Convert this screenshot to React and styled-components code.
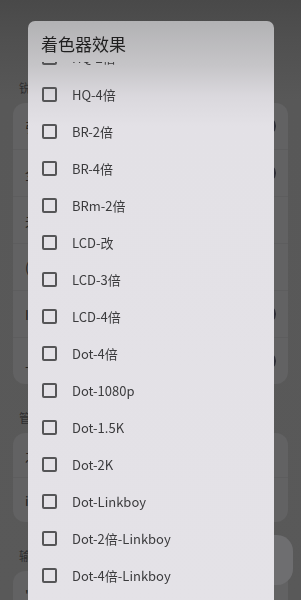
import React from 'react';
import styled, { createGlobalStyle } from 'styled-components';

const GlobalStyle = createGlobalStyle`
  html, body {
    margin: 0;
    padding: 0;
    background: #595959;
    font-family: "Noto Sans CJK SC", "Noto Sans", sans-serif;
    overflow: hidden;
  }
`;

const Page = styled.div`
  width: 301px;
  height: 600px;
  overflow: hidden;
  background: linear-gradient(#494949 0, #505050 40px, #585858 100px, #595959 100%);
  padding: 80px 13px 0;
  box-sizing: border-box;
`;

const SectionLabel = styled.div`
  font-size: 12px;
  line-height: 16px;
  color: #2e2e30;
  padding: 0 0 7px 6px;
`;

const Card = styled.div`
  background: #626263;
  border-radius: 12px;
  margin-bottom: 26px;
  overflow: hidden;
`;

const Row = styled.div`
  height: ${({ compact }) => (compact ? '44px' : '46px')};
  display: flex;
  align-items: center;
  justify-content: space-between;
  padding: 0 12px;
  font-size: 13px;
  color: #222;
  & + & {
    border-top: 1px solid #5d5d5e;
  }
`;

const Toggle = styled.span`
  width: 36px;
  height: 20px;
  border-radius: 10px;
  box-sizing: border-box;
  border: 2px solid #2c2c34;
  background: ${({ on }) => (on ? '#23233c' : 'transparent')};
`;

const Chevron = styled.span`
  font-size: 16px;
  color: #2a2a2a;
  margin-right: 2px;
`;

const Fab = styled.div`
  position: fixed;
  right: 8px;
  top: 535px;
  width: 44px;
  height: 50px;
  border-radius: 16px;
  background: #6e6e70;
`;

const Dialog = styled.div`
  position: fixed;
  left: 28px;
  top: 21px;
  width: 246px;
  bottom: -20px;
  border-radius: 7px 7px 0 0;
  background: linear-gradient(#b2b2b4 0, #c6c5c8 45px, #dad8dd 75px, #e3e1e6 105px, #e4e2e7 100%);
  display: flex;
  flex-direction: column;
  overflow: hidden;
`;

const Title = styled.div`
  height: 41px;
  flex-shrink: 0;
  padding: 11px 0 0 13px;
  box-sizing: border-box;
  font-size: 17px;
  line-height: 24px;
  color: #1f1f1f;
`;

const List = styled.div`
  flex: 1;
  overflow: hidden;
`;

const Scroller = styled.div`
  margin-top: -23px;
`;

const Option = styled.label`
  height: 37px;
  display: flex;
  align-items: center;
  padding-left: 14px;
  font-size: 13px;
  color: #3b3b3d;
`;

const Box = styled.span`
  width: 15px;
  height: 15px;
  box-sizing: border-box;
  border: 2px solid #555557;
  border-radius: 2px;
  margin-right: 15px;
  flex-shrink: 0;
`;

const sections = [
  {
    label: '锐化',
    rows: [
      { text: '引擎', control: 'toggle' },
      { text: '全屏', control: 'toggle' },
      { text: '夫', control: 'none' },
      { text: '(', control: 'chevron' },
      { text: 'I', control: 'toggleOn' },
      { text: '上', control: 'toggle' }
    ]
  },
  {
    label: '管理',
    compact: true,
    rows: [
      { text: '之', control: 'chevron' },
      { text: 'i', control: 'chevron' }
    ]
  },
  {
    label: '输入',
    rows: [{ text: '\'', control: 'none' }]
  }
];

const shaders = [
  'HQ-2倍',
  'HQ-4倍',
  'BR-2倍',
  'BR-4倍',
  'BRm-2倍',
  'LCD-改',
  'LCD-3倍',
  'LCD-4倍',
  'Dot-4倍',
  'Dot-1080p',
  'Dot-1.5K',
  'Dot-2K',
  'Dot-Linkboy',
  'Dot-2倍-Linkboy',
  'Dot-4倍-Linkboy'
];

function Control({ type }) {
  if (type === 'toggle') return <Toggle />;
  if (type === 'toggleOn') return <Toggle on />;
  if (type === 'chevron') return <Chevron>›</Chevron>;
  return null;
}

export default function App() {
  return (
    <>
      <GlobalStyle />
      <Page>
        {sections.map((section) => (
          <div key={section.label}>
            <SectionLabel>{section.label}</SectionLabel>
            <Card>
              {section.rows.map((row, i) => (
                <Row key={i} compact={section.compact}>
                  <span>{row.text}</span>
                  <Control type={row.control} />
                </Row>
              ))}
            </Card>
          </div>
        ))}
      </Page>
      <Fab />
      <Dialog>
        <Title>着色器效果</Title>
        <List>
          <Scroller>
            {shaders.map((name) => (
              <Option key={name}>
                <Box />
                {name}
              </Option>
            ))}
          </Scroller>
        </List>
      </Dialog>
    </>
  );
}
